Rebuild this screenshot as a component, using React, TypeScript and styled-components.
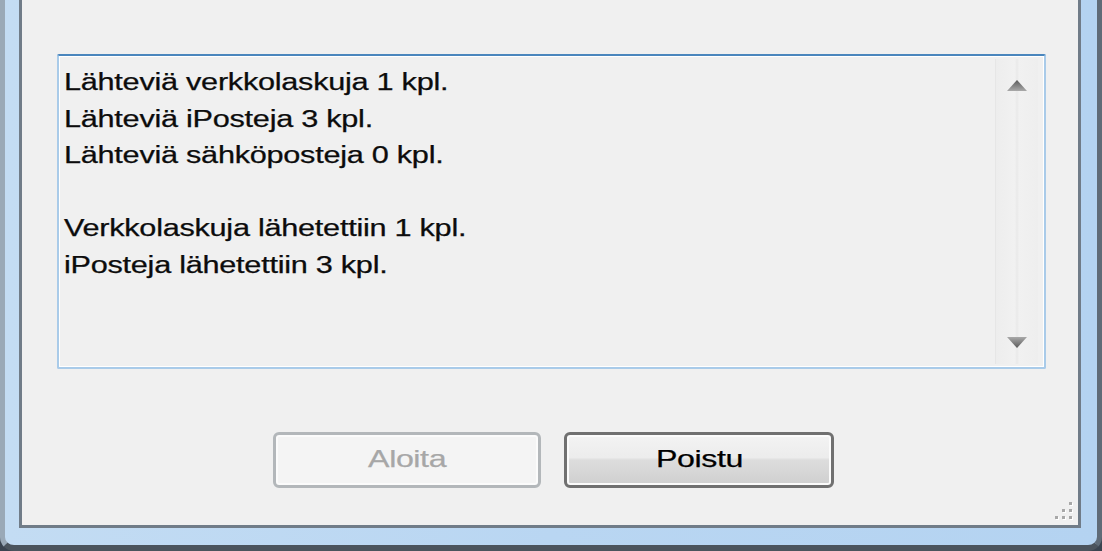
import React from "react";
import styled, { createGlobalStyle } from "styled-components";

const Global = createGlobalStyle`
  html, body { margin: 0; padding: 0; background: #3a4450; }
  body { width: 1102px; height: 551px; overflow: hidden; }
  #root { width: 1102px; height: 551px; }
`;

const Frame = styled.div`
  box-sizing: border-box;
  width: 1102px;
  height: 551px;
  display: flex;
  padding: 0 16px 17px 14px;
  background: linear-gradient(to right, #c3dcf3 0%, #b9d6f2 50%, #b4d3f1 100%);
  border-left: 5px solid #9aa9b7;
  border-right: 5px solid #5f6b77;
  border-bottom: 6px solid #4b545d;
  border-bottom-left-radius: 14px;
  border-bottom-right-radius: 14px;
`;

const Content = styled.div`
  position: relative;
  flex: 1;
  box-sizing: border-box;
  display: flex;
  flex-direction: column;
  background: #f0f0f0;
  border: 3px solid #707c88;
  border-top: none;
  padding: 54px 32px 0 35px;
  font-family: "Liberation Sans", Arial, sans-serif;
`;

const TextBox = styled.div`
  box-sizing: border-box;
  height: 315px;
  display: flex;
  border: 2px solid #a9cbe9;
  border-top-color: #4a86bd;
  border-radius: 2px;
  background: #f0f0f0;
  box-shadow: inset 0 0 0 1px #ffffff;
  padding: 3px;
`;

const TextArea = styled.div`
  flex: 1;
  min-width: 0;
  padding: 5px 0 0 2px;
  font-size: 23px;
  line-height: 36.6px;
  color: #0c0c0c;
  letter-spacing: -0.2px;
  -webkit-text-stroke: 0.25px #0c0c0c;
`;

const Line = styled.div`
  width: max-content;
  height: 36.6px;
  white-space: pre;
  transform: scaleX(1.333);
  transform-origin: left center;
`;

const ScrollBar = styled.div`
  width: 42px;
  display: flex;
  flex-direction: column;
  justify-content: space-between;
  align-items: center;
  border-left: 1px solid #e6e6e6;
  background: linear-gradient(to right, #ededed 0%, #f1f1f1 45%, #e9e9e9 50%, #f1f1f1 55%, #eeeeee 100%);
  padding: 21px 0 16px 0;
  margin-right: 3px;
`;

const Arrow = styled.svg`
  display: block;
`;

const ButtonRow = styled.div`
  display: flex;
  justify-content: center;
  gap: 23px;
  margin-top: 63px;
  padding-left: 4px;
`;

const Button = styled.div<{ $disabled?: boolean }>`
  box-sizing: border-box;
  width: ${(p) => (p.$disabled ? "268px" : "270px")};
  height: 56px;
  display: flex;
  align-items: center;
  justify-content: center;
  border-radius: 6px;
  border: 3px solid ${(p) => (p.$disabled ? "#b3b7ba" : "#707070")};
  box-shadow: inset 0 0 0 2px #fbfbfb;
  background: ${(p) =>
    p.$disabled
      ? "#f4f4f4"
      : "linear-gradient(to bottom, #f3f3f3 0%, #ececec 45%, #dddddd 50%, #cfcfcf 100%)"};
  color: ${(p) => (p.$disabled ? "#a7a7a7" : "#000")};
  -webkit-text-stroke: 0.25px ${(p) => (p.$disabled ? "#a7a7a7" : "#000")};
  font-size: 24px;
  letter-spacing: -0.3px;
  padding-bottom: 2px;
`;

const Label = styled.span`
  display: inline-block;
  transform: scaleX(1.34);
`;

const Grip = styled.div`
  position: absolute;
  right: 2px;
  bottom: 2px;
  display: grid;
  grid-template-columns: repeat(3, 7px);
  grid-template-rows: repeat(3, 7px);
`;

const Dot = styled.span<{ $on: boolean }>`
  width: 3px;
  height: 3px;
  background: ${(p) => (p.$on ? "#a8a8a8" : "transparent")};
  box-shadow: ${(p) => (p.$on ? "1px 1px 0 #ffffff" : "none")};
`;

const lines = [
  "Lähteviä verkkolaskuja 1 kpl.",
  "Lähteviä iPosteja 3 kpl.",
  "Lähteviä sähköposteja 0 kpl.",
  "",
  "Verkkolaskuja lähetettiin 1 kpl.",
  "iPosteja lähetettiin 3 kpl.",
];

const gripPattern = [
  false, false, true,
  false, true, true,
  true, true, true,
];

export default function App() {
  return (
    <>
      <Global />
      <Frame>
        <Content>
          <TextBox>
            <TextArea>
              {lines.map((l, i) => (
                <Line key={i}>{l}</Line>
              ))}
            </TextArea>
            <ScrollBar>
              <Arrow width="20" height="11" viewBox="0 0 20 11">
                <defs>
                  <linearGradient id="ga" x1="0" y1="0" x2="0" y2="1">
                    <stop offset="0" stopColor="#5a5a5a" />
                    <stop offset="1" stopColor="#a9a9a9" />
                  </linearGradient>
                </defs>
                <polygon points="10,0 20,11 0,11" fill="url(#ga)" />
              </Arrow>
              <Arrow width="20" height="11" viewBox="0 0 20 11">
                <defs>
                  <linearGradient id="gb" x1="0" y1="0" x2="0" y2="1">
                    <stop offset="0" stopColor="#a9a9a9" />
                    <stop offset="1" stopColor="#5a5a5a" />
                  </linearGradient>
                </defs>
                <polygon points="0,0 20,0 10,11" fill="url(#gb)" />
              </Arrow>
            </ScrollBar>
          </TextBox>
          <ButtonRow>
            <Button $disabled>
              <Label>Aloita</Label>
            </Button>
            <Button>
              <Label>Poistu</Label>
            </Button>
          </ButtonRow>
          <Grip>
            {gripPattern.map((on, i) => (
              <Dot key={i} $on={on} />
            ))}
          </Grip>
        </Content>
      </Frame>
    </>
  );
}
